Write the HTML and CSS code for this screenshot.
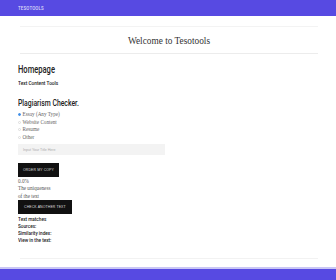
FILE: index.html
```html
<!DOCTYPE html>
<html>
<head>
<meta charset="utf-8">
<link rel="stylesheet" href="styles.css">
</head>
<body>
<header class="topbar"><span class="brand">TESOTOOLS</span></header>
<main class="page">
  <section class="welcome"><h1 class="welcome-title">Welcome to Tesotools</h1></section>
  <h2 class="home cond">Homepage</h2>
  <p class="subtitle cond">Text Content Tools</p>
  <h3 class="checker cond">Plagiarism Checker.</h3>
  <ul class="options">
    <li class="option"><span class="dot on"></span>Essay (Any Type)</li>
    <li class="option"><span class="dot"></span>Website Content</li>
    <li class="option"><span class="dot"></span>Resume</li>
    <li class="option"><span class="dot"></span>Other</li>
  </ul>
  <div class="input">Input Your Title Here</div>
  <button class="btn first">ORDER MY COPY</button>
  <div class="result">
    <p>0.0%</p>
    <p>The uniqueness</p>
    <p>of the text</p>
  </div>
  <button class="btn">CHECK ANOTHER TEXT</button>
  <ul class="stats cond">
    <li>Text matches</li>
    <li>Sources:</li>
    <li>Similarity index:</li>
    <li>View in the text:</li>
  </ul>
  <div class="rule"></div>
</main>
<footer class="footbar"></footer>
</body>
</html>
```
FILE: styles.css
```css
* { box-sizing: border-box; margin: 0; padding: 0; }
html, body { width: 336px; height: 280px; overflow: hidden; background: #fff; }
body { font-family: "Liberation Serif", serif; color: #333; position: relative; }
.cond {
  font-family: Roboto, "Liberation Sans", sans-serif;
  transform-origin: left center;
}
.topbar {
  height: 16px; background: #574ae2; display: flex; align-items: center;
  padding-left: 18px;
}
.brand {
  display: inline-block; color: #dcdcf8; font-family: Roboto, sans-serif;
  font-size: 5.5px; letter-spacing: 0.2px; font-weight: 500;
  transform: scaleX(0.8); transform-origin: left center;
}
.page { padding: 0 18px 0 18px; height: 250px; }
.welcome {
  margin-top: 10px; border-top: 1px solid #f3f3f3; border-bottom: 1px solid #ececec;
  height: 28px; display: flex; align-items: center; justify-content: center;
  margin-left: 2px;
}
.welcome-title { font-weight: normal; font-size: 9.3px; color: #333; padding-top: 2px; }
.home {
  margin-top: 10px; font-size: 10.5px; line-height: 12px; color: #222;
  font-weight: 500; transform: scaleX(0.72);
}
.subtitle {
  margin-top: 3px; font-size: 6px; line-height: 8px; font-weight: 500; color: #222;
  transform: scaleX(0.8);
}
.checker {
  margin-top: 10px; font-size: 9.5px; line-height: 11px; font-weight: 500; color: #222;
  transform: scaleX(0.72);
}
.options { list-style: none; margin-top: 3px; }
.option {
  display: flex; align-items: center; gap: 1.5px; font-size: 5.2px; line-height: 7.6px; color: #666;
}
.dot { width: 3px; height: 3px; border-radius: 50%; border: 0.5px solid #ddd; }
.dot.on { background: #3d8ee8; border-color: #3d8ee8; }
.input {
  margin-top: 3px; width: 147px; height: 11px; background: #f3f3f3;
  font-family: "Liberation Sans", sans-serif; font-size: 3.6px; color: #aaa;
  display: flex; align-items: center; padding-left: 5px;
}
.btn {
  display: flex; align-items: center; justify-content: center; white-space: nowrap;
  background: #111; color: #ddd; border: none; height: 14px; padding: 0 6px;
  font-family: "Liberation Sans", sans-serif; font-size: 3.5px; letter-spacing: 0.1px;
}
.btn.first { margin-top: 8px; width: 41px; padding: 0; }
.result { font-size: 5.2px; line-height: 7.5px; color: #555; padding-top: 0.5px; }
.stats {
  list-style: none; margin-top: 1px; font-size: 6px; line-height: 7px; font-weight: 500; color: #222;
  transform: scaleX(0.78);
}
.rule { margin-top: 15px; margin-left: 2px; border-top: 1px solid #f2f2f2; }
.footbar {
  position: absolute; left: 0; right: 0; bottom: 0; height: 13px;
  background: #574ae2; border-top: 2px solid #c9c6f5;
}
```
